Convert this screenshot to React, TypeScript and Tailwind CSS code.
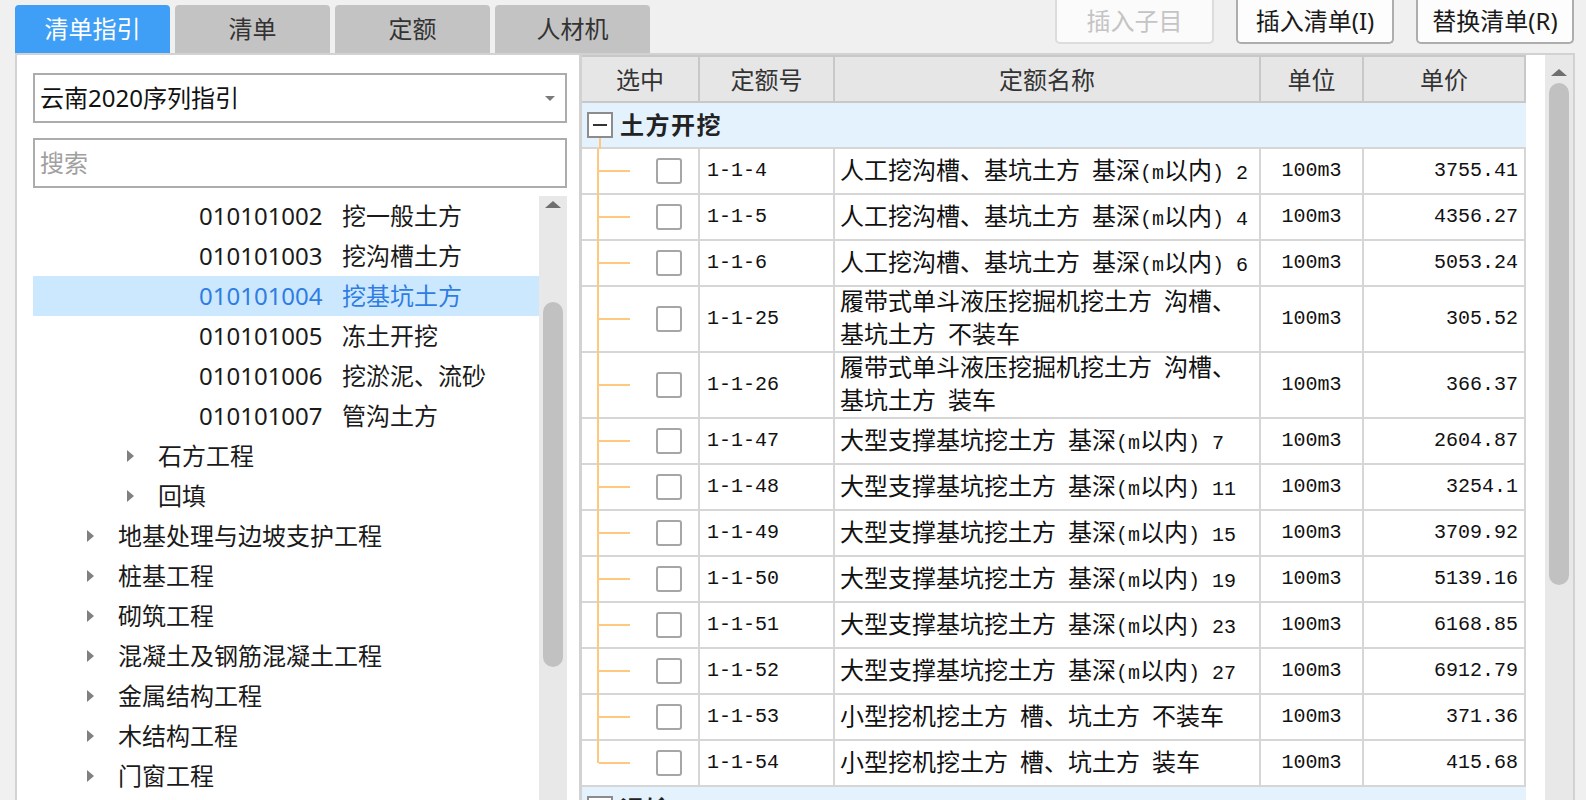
import React from 'react';

const uiFont = "font-['Noto_Sans','Noto_Sans_CJK_SC',sans-serif]";
const dataFont = "font-['Noto_Sans_CJK_SC',sans-serif]";

type TreeItem = { level: 1 | 2 | 3; code?: string; name: string; selected?: boolean };

const tree: TreeItem[] = [
  { level: 3, code: '010101002', name: '挖一般土方' },
  { level: 3, code: '010101003', name: '挖沟槽土方' },
  { level: 3, code: '010101004', name: '挖基坑土方', selected: true },
  { level: 3, code: '010101005', name: '冻土开挖' },
  { level: 3, code: '010101006', name: '挖淤泥、流砂' },
  { level: 3, code: '010101007', name: '管沟土方' },
  { level: 2, name: '石方工程' },
  { level: 2, name: '回填' },
  { level: 1, name: '地基处理与边坡支护工程' },
  { level: 1, name: '桩基工程' },
  { level: 1, name: '砌筑工程' },
  { level: 1, name: '混凝土及钢筋混凝土工程' },
  { level: 1, name: '金属结构工程' },
  { level: 1, name: '木结构工程' },
  { level: 1, name: '门窗工程' },
];

type Quota = { code: string; name: string[]; unit: string; price: string };

const quotas: Quota[] = [
  { code: '1-1-4', name: ['人工挖沟槽、基坑土方 基深(m以内) 2'], unit: '100m3', price: '3755.41' },
  { code: '1-1-5', name: ['人工挖沟槽、基坑土方 基深(m以内) 4'], unit: '100m3', price: '4356.27' },
  { code: '1-1-6', name: ['人工挖沟槽、基坑土方 基深(m以内) 6'], unit: '100m3', price: '5053.24' },
  { code: '1-1-25', name: ['履带式单斗液压挖掘机挖土方 沟槽、', '基坑土方 不装车'], unit: '100m3', price: '305.52' },
  { code: '1-1-26', name: ['履带式单斗液压挖掘机挖土方 沟槽、', '基坑土方 装车'], unit: '100m3', price: '366.37' },
  { code: '1-1-47', name: ['大型支撑基坑挖土方 基深(m以内) 7'], unit: '100m3', price: '2604.87' },
  { code: '1-1-48', name: ['大型支撑基坑挖土方 基深(m以内) 11'], unit: '100m3', price: '3254.1' },
  { code: '1-1-49', name: ['大型支撑基坑挖土方 基深(m以内) 15'], unit: '100m3', price: '3709.92' },
  { code: '1-1-50', name: ['大型支撑基坑挖土方 基深(m以内) 19'], unit: '100m3', price: '5139.16' },
  { code: '1-1-51', name: ['大型支撑基坑挖土方 基深(m以内) 23'], unit: '100m3', price: '6168.85' },
  { code: '1-1-52', name: ['大型支撑基坑挖土方 基深(m以内) 27'], unit: '100m3', price: '6912.79' },
  { code: '1-1-53', name: ['小型挖机挖土方 槽、坑土方 不装车'], unit: '100m3', price: '371.36' },
  { code: '1-1-54', name: ['小型挖机挖土方 槽、坑土方 装车'], unit: '100m3', price: '415.68' },
];

// ascii runs get the narrow mono face, like the old SimSun grid
function Mixed({ text }: { text: string }) {
  const parts = text.split(/([\x20-\x7e]+)/).filter(Boolean);
  return (
    <>
      {parts.map((p, i) =>
        /^[\x20-\x7e]+$/.test(p) ? (
          <span key={i} className="whitespace-pre font-['Liberation_Mono',monospace] text-[20px]">
            {p}
          </span>
        ) : (
          <span key={i}>{p}</span>
        )
      )}
    </>
  );
}

function UpArrow() {
  return (
    <svg width="16" height="7" viewBox="0 0 16 7">
      <path d="M8 0 L16 7 L0 7 Z" fill="#6f6f6f" />
    </svg>
  );
}

function Scrollbar({ arrowTop, gap, thumb }: { arrowTop: string; gap: string; thumb: string }) {
  return (
    <div className={`w-[28px] shrink-0 bg-[#e8e8e8] flex flex-col items-center ${arrowTop}`}>
      <UpArrow />
      <div className={`w-[20px] rounded-full bg-[#c1c1c1] ${gap} ${thumb}`} />
    </div>
  );
}

function TreeArrow() {
  return (
    <svg width="7" height="12" viewBox="0 0 7 12" className="shrink-0">
      <path d="M0 0 L7 6 L0 12 Z" fill="#808080" />
    </svg>
  );
}

function TreeRow({ item }: { item: TreeItem }) {
  const color = item.selected ? 'text-[#2f7de2] bg-[#cce8ff]' : 'text-[#1a1a1a]';
  if (item.level === 3) {
    return (
      <div className={`h-[40px] flex items-center pl-[166px] text-[24px] leading-none ${color}`}>
        <span className="inline-block w-[143px]">{item.code}</span>
        <span>{item.name}</span>
      </div>
    );
  }
  return (
    <div className={`h-[40px] flex items-center text-[24px] leading-none ${color} ${item.level === 1 ? 'pl-[54px]' : 'pl-[94px]'}`}>
      <TreeArrow />
      <span className="ml-[24px]">{item.name}</span>
    </div>
  );
}

function LeftPanel() {
  return (
    <div className="w-[562px] shrink-0 bg-white flex flex-col">
      <div className="mt-[18px] ml-[16px] w-[534px] h-[50px] border-2 border-[#acacac] flex items-center justify-between pl-[5px] pr-[10px]">
        <span className="text-[24px] leading-none text-[#111]">云南2020序列指引</span>
        <svg width="10" height="5" viewBox="0 0 10 5">
          <path d="M0 0 L10 0 L5 5 Z" fill="#7a7a7a" />
        </svg>
      </div>
      <div className="mt-[15px] ml-[16px] w-[534px] h-[50px] border-2 border-[#acacac] flex items-center pl-[5px]">
        <span className="text-[24px] leading-none text-[#a0a0a0]">搜索</span>
      </div>
      <div className="mt-[8px] ml-[16px] w-[534px] flex-1 flex overflow-hidden">
        <div className="w-[506px] flex flex-col">
          {tree.map((t, i) => (
            <TreeRow key={i} item={t} />
          ))}
        </div>
        <Scrollbar arrowTop="pt-[5px]" gap="mt-[94px]" thumb="h-[365px]" />
      </div>
    </div>
  );
}

const cols = ['w-[118px]', 'w-[135px]', 'w-[426px]', 'w-[103px]', 'w-[162px]'];
const orange = 'bg-[#ffc87f]';

function GroupRow({ title }: { title: string }) {
  return (
    <div className="h-[46px] shrink-0 flex items-start border-b-2 border-[#d6d6d6] bg-[#e4f2fe]">
      <div className="w-[32px] h-[46px] flex flex-col items-center pl-[3px] pt-[9px]">
        <div className="w-[26px] h-[26px] border-2 border-[#8c8c8c] bg-white flex items-center justify-center shrink-0">
          <div className="w-[14px] h-[2px] bg-[#333]" />
        </div>
        <div className={`w-[2px] flex-1 ${orange}`} />
      </div>
      <div className="ml-[6px] self-center text-[24px] font-bold tracking-[1.5px] leading-none text-[#222]">{title}</div>
    </div>
  );
}

function QuotaRow({ q, last }: { q: Quota; last: boolean }) {
  const tall = q.name.length > 1;
  const cell = 'border-r-2 border-[#d6d6d6] flex items-center';
  // the guide line runs over the row's bottom border so it reads as one stroke
  const line = last ? 'h-[22px]' : tall ? 'h-[66px]' : 'h-[46px]';
  return (
    <div className={`${tall ? 'h-[66px]' : 'h-[46px]'} shrink-0 flex border-b-2 border-[#d6d6d6] bg-white text-[24px] text-[#111] ${dataFont}`}>
      <div className={`${cols[0]} border-r-2 border-[#d6d6d6] flex items-stretch`}>
        <div className={`ml-[15px] w-[2px] self-start ${orange} ${line}`} />
        <div className={`self-center w-[31px] h-[2px] ${orange}`} />
        <div className="flex-1" />
        <div className="self-center mr-[16px] w-[26px] h-[26px] rounded-[3px] border-2 border-[#a6a6a6] bg-white" />
      </div>
      <div className={`${cols[1]} ${cell} pl-[7px] leading-none`}>
        <Mixed text={q.code} />
      </div>
      <div className={`${cols[2]} ${cell} pl-[5px]`}>
        <div className="leading-[28px]">
          {q.name.map((l, i) => (
            <div key={i} className="whitespace-nowrap">
              <Mixed text={l} />
            </div>
          ))}
        </div>
      </div>
      <div className={`${cols[3]} ${cell} justify-center leading-none`}>
        <Mixed text={q.unit} />
      </div>
      <div className={`${cols[4]} ${cell} justify-end pr-[6px] leading-none`}>
        <Mixed text={q.price} />
      </div>
    </div>
  );
}

function RightPanel() {
  const heads = ['选中', '定额号', '定额名称', '单位', '单价'];
  return (
    <div className="flex-1 flex bg-white">
      <div className="w-[944px] flex flex-col overflow-hidden">
        <div className={`h-[48px] shrink-0 flex border-y-2 border-[#c8c8c8] bg-[#e6e6e6] ${dataFont}`}>
          {heads.map((h, i) => (
            <div key={h} className={`${cols[i]} border-r-2 border-[#c8c8c8] flex items-center justify-center text-[24px] leading-none text-[#333]`}>
              {h}
            </div>
          ))}
        </div>
        <GroupRow title="土方开挖" />
        {quotas.map((q, i) => (
          <QuotaRow key={q.code} q={q} last={i === quotas.length - 1} />
        ))}
        <GroupRow title="运输" />
      </div>
      <div className="w-[19px]" />
      <Scrollbar arrowTop="pt-[14px]" gap="mt-[7px]" thumb="h-[502px]" />
    </div>
  );
}

function TopBar() {
  const tabs = ['清单指引', '清单', '定额', '人材机'];
  return (
    <div className="h-[53px] flex justify-between pl-[15px] pr-[12px]">
      <div className="flex gap-[5px] pt-[5px]">
        {tabs.map((t, i) => (
          <div
            key={t}
            className={`w-[155px] h-[48px] rounded-t-[4px] flex items-center justify-center text-[24px] leading-none ${
              i === 0 ? 'bg-[#3f9ef6] text-white' : 'bg-[#c3c3c3] text-[#333]'
            }`}
          >
            {t}
          </div>
        ))}
      </div>
      <div className="flex gap-[22px] items-start">
        <div className="w-[159px] h-[44px] border-x-2 border-b-2 border-[#dcdcdc] rounded-b-[5px] bg-[#fbfbfb] flex items-center justify-center text-[24px] leading-none text-[#c4c4c4]">
          插入子目
        </div>
        <div className="w-[158px] h-[44px] border-x-2 border-b-2 border-[#adadad] rounded-b-[5px] bg-[#fdfdfd] flex items-center justify-center text-[24px] leading-none text-[#1a1a1a]">
          插入清单(I)
        </div>
        <div className="w-[158px] h-[44px] border-x-2 border-b-2 border-[#adadad] rounded-b-[5px] bg-[#fdfdfd] flex items-center justify-center text-[24px] leading-none text-[#1a1a1a]">
          替换清单(R)
        </div>
      </div>
    </div>
  );
}

export default function App() {
  return (
    <div className={`w-[1586px] h-[800px] overflow-hidden bg-[#f0f0f0] flex flex-col ${uiFont}`}>
      <TopBar />
      <div className="ml-[15px] w-[1560px] flex-1 flex border-x-2 border-t-2 border-[#d2d2d2] overflow-hidden">
        <LeftPanel />
        <div className="w-[3px] shrink-0 bg-[#d2d2d2]" />
        <RightPanel />
      </div>
    </div>
  );
}
